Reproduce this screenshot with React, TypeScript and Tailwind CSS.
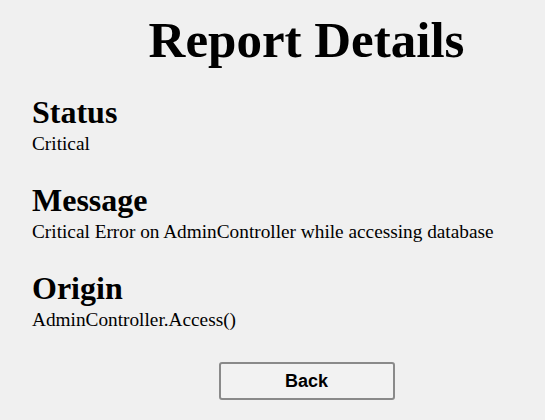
export default function App() {
  const fields = [
    { label: "Status", value: "Critical" },
    { label: "Message", value: "Critical Error on AdminController while accessing database" },
    { label: "Origin", value: "AdminController.Access()" },
  ];

  return (
    <div className="w-full h-[420px] overflow-hidden bg-[#f0f0f0] text-black font-['Liberation_Serif',serif]">
      <h1 className="pl-[68px] pt-[10px] text-center text-[51px] font-bold leading-[60px]">Report Details</h1>

      <div className="pl-8 mt-[24px] flex flex-col gap-[28px]">
        {fields.map((f) => (
          <div key={f.label}>
            <h2 className="text-[32px] font-bold leading-[36px]">{f.label}</h2>
            <p className="mt-[4px] text-[19.3px] leading-[20px]">{f.value}</p>
          </div>
        ))}
      </div>

      <div className="pl-[68px] mt-[32px] flex justify-center">
        <button className="w-[176px] h-[38px] rounded-[3px] border-2 border-[#8a8a8a] bg-[#f2f2f2] font-['Liberation_Sans',sans-serif] text-[18px] font-bold">
          Back
        </button>
      </div>
    </div>
  );
}
